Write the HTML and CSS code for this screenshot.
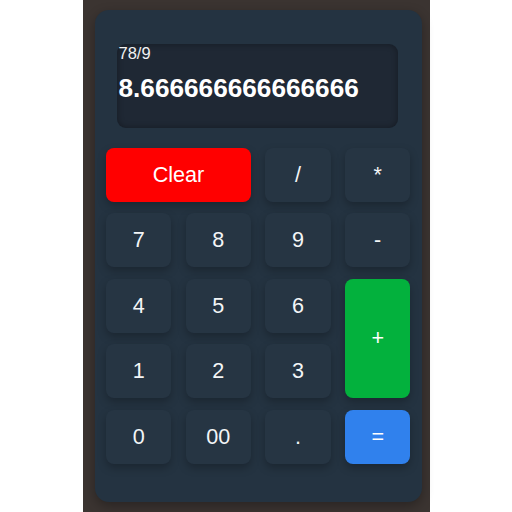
FILE: index.html
```html
<!DOCTYPE html>
<html>
<head>
<meta charset="utf-8">
<link rel="stylesheet" href="styles.css">
</head>
<body>
<div class="frame">
  <div class="calc">
    <div class="display">
      <div class="expr">78/9</div>
      <div class="result">8.666666666666666</div>
    </div>
    <div class="keys">
      <button class="key clear span2">Clear</button>
      <button class="key">/</button>
      <button class="key">*</button>
      <button class="key">7</button>
      <button class="key">8</button>
      <button class="key">9</button>
      <button class="key">-</button>
      <button class="key">4</button>
      <button class="key">5</button>
      <button class="key">6</button>
      <button class="key plus">+</button>
      <button class="key">1</button>
      <button class="key">2</button>
      <button class="key">3</button>
      <button class="key">0</button>
      <button class="key">00</button>
      <button class="key">.</button>
      <button class="key equals">=</button>
    </div>
  </div>
</div>
</body>
</html>
```

FILE: styles.css
```css
* { box-sizing: border-box; }
html, body {
  margin: 0;
  padding: 0;
  background: #ffffff;
  font-family: "Liberation Sans", Arial, sans-serif;
}
.frame {
  width: 347px;
  height: 512px;
  margin: 0 auto;
  background: #3b3431;
  padding: 9.5px 7.5px 10px 12px;
}
.calc {
  width: 327px;
  height: 492px;
  background: #243341;
  border-radius: 14px;
  padding: 34.5px 11px 38px 11.5px;
  box-shadow: 0 4px 12px rgba(0,0,0,0.3);
}
.display {
  height: 84px;
  margin: 0 12.5px 19.5px 10.5px;
  background: #1f2834;
  border-radius: 9px;
  padding: 0 2px;
  color: #ffffff;
  box-shadow: inset 0 0 6px rgba(0,0,0,0.35);
}
.expr {
  font-size: 16.5px;
  line-height: 18.4px;
  color: #f2f2f2;
}
.result {
  margin-top: 11px;
  font-size: 26.2px;
  font-weight: bold;
  line-height: 30px;
  color: #ffffff;
  white-space: nowrap;
}
.keys {
  display: grid;
  grid-template-columns: repeat(4, 65.3px);
  grid-auto-rows: 54px;
  column-gap: 14.4px;
  row-gap: 11.5px;
}
.key {
  border: none;
  border-radius: 8px;
  background: #263543;
  color: #f3f5f7;
  font-family: "Liberation Sans", Arial, sans-serif;
  font-size: 21.6px;
  padding: 0;
  box-shadow: 0 4px 8px rgba(0,0,0,0.25);
}
.span2 { grid-column: span 2; }
.clear { background: #ff0000; color: #ffffff; }
.plus {
  grid-column: 4;
  grid-row: 3 / span 2;
  background: #03b13d;
  color: #ffffff;
}
.equals { background: #3081ed; color: #ffffff; }
```
